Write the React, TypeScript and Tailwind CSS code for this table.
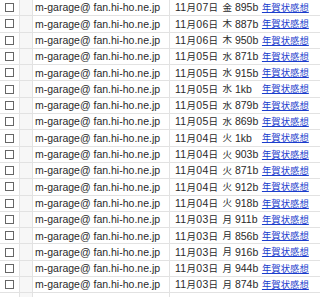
import React from "react";

const rows: [string, string, string][] = [
  ["11月07日", "金", "895b"],
  ["11月06日", "木", "887b"],
  ["11月06日", "木", "950b"],
  ["11月05日", "水", "871b"],
  ["11月05日", "水", "915b"],
  ["11月05日", "水", "1kb"],
  ["11月05日", "水", "879b"],
  ["11月05日", "水", "869b"],
  ["11月04日", "火", "1kb"],
  ["11月04日", "火", "903b"],
  ["11月04日", "火", "871b"],
  ["11月04日", "火", "912b"],
  ["11月04日", "火", "918b"],
  ["11月03日", "月", "911b"],
  ["11月03日", "月", "856b"],
  ["11月03日", "月", "916b"],
  ["11月03日", "月", "944b"],
  ["11月03日", "月", "874b"],
  ["", "", ""],
];

export default function App() {
  return (
    <div
      className="w-[320px] h-[297px] overflow-hidden bg-white text-[10.5px] text-[#2a2a2a]"
      style={{ fontFamily: '"Liberation Sans", "Noto Sans CJK JP", sans-serif' }}
    >
      <div className="flex flex-col -mt-[1px]">
        {rows.map((r, i) => (
          <div key={i} className="flex h-[16.3px] border-t border-[#e2e2e2] items-stretch">
            <div className="w-[20px] flex items-center justify-center border-r border-[#e2e2e2]">
              {r[0] && <div className="w-[9px] h-[9px] border border-[#666] bg-white" />}
            </div>
            <div className="w-[13px] border-r border-[#e2e2e2] bg-[#f7f7f7]" />
            <div className="w-[137px] pl-[2px] flex items-center border-r border-[#e2e2e2] whitespace-nowrap leading-none">
              {r[0] && "m-garage@ fan.hi-ho.ne.jp"}
            </div>
            <div className="flex-1 pl-[5px] flex items-center whitespace-nowrap leading-none">
              {r[0] && (
                <>
                  <span className="tracking-[0.3px]">
                    {r[0].slice(0, 2)}
                    <span className="text-[9.5px]">月</span>
                    {r[0].slice(3, 5)}
                    <span className="text-[9.5px]">日</span>
                  </span>
                  <span className="ml-[4px] text-[9.5px]">{r[1]}</span>
                  <span className="ml-[3px] w-[25px]">{r[2]}</span>
                  <a className="ml-[2px] text-[9.4px] text-[#1a3ccc] underline">年賀状感想</a>
                </>
              )}
            </div>
          </div>
        ))}
      </div>
    </div>
  );
}
